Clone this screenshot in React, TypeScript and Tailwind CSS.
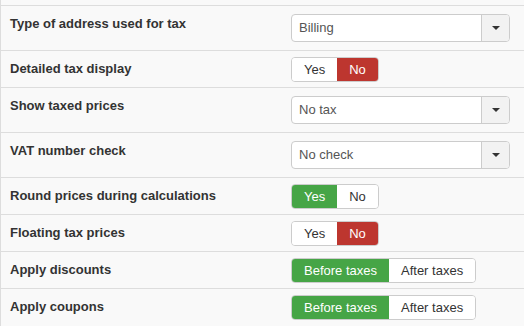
import React from 'react';

type Row =
  | { label: string; kind: 'select'; value: string }
  | { label: string; kind: 'toggle'; options: string[]; active: number; tone: 'green' | 'red' };

const rows: Row[] = [
  { label: 'Type of address used for tax', kind: 'select', value: 'Billing' },
  { label: 'Detailed tax display', kind: 'toggle', options: ['Yes', 'No'], active: 1, tone: 'red' },
  { label: 'Show taxed prices', kind: 'select', value: 'No tax' },
  { label: 'VAT number check', kind: 'select', value: 'No check' },
  { label: 'Round prices during calculations', kind: 'toggle', options: ['Yes', 'No'], active: 0, tone: 'green' },
  { label: 'Floating tax prices', kind: 'toggle', options: ['Yes', 'No'], active: 1, tone: 'red' },
  { label: 'Apply discounts', kind: 'toggle', options: ['Before taxes', 'After taxes'], active: 0, tone: 'green' },
  { label: 'Apply coupons', kind: 'toggle', options: ['Before taxes', 'After taxes'], active: 0, tone: 'green' },
];

function Select({ value }: { value: string }) {
  return (
    <div className="flex h-[28px] w-[219px] overflow-hidden rounded-[4px] border border-[#cccccc] bg-white">
      <div className="flex flex-1 items-center pl-[7px] text-[13px] text-[#555555]">{value}</div>
      <div className="flex w-[28px] items-center justify-center border-l border-[#cccccc] bg-[#f2f2f2]">
        <svg width="8" height="4" viewBox="0 0 8 4">
          <path d="M0 0h8L4 4z" fill="#333333" />
        </svg>
      </div>
    </div>
  );
}

function Toggle({ options, active, tone }: { options: string[]; active: number; tone: 'green' | 'red' }) {
  return (
    <div className="flex h-[25px] overflow-hidden rounded-[4px] border border-[#cccccc]">
      {options.map((opt, i) => {
        const on = i === active;
        const cls = on
          ? tone === 'green'
            ? 'bg-[#46a546] text-white'
            : 'bg-[#bd362f] text-white'
          : 'bg-white text-[#333333]';
        return (
          <div key={opt} className={`flex items-center px-3 text-[13px] ${cls}`}>
            {opt}
          </div>
        );
      })}
    </div>
  );
}

export default function App() {
  return (
    <div className="h-[326px] w-[524px] overflow-hidden border-l border-[#dddddd] bg-[#f9f9f9] font-['Liberation_Sans',Arial,sans-serif]">
      <div className="h-[5px]" />
      {rows.map((row) => (
        <div key={row.label} className="flex border-t border-[#dddddd]">
          <div className="w-[290px] shrink-0 py-2 pl-[9px] text-[13px] leading-5 font-bold text-[#333333]">
            {row.label}
          </div>
          <div className={row.kind === 'select' ? 'py-2' : 'pt-[6px] pb-[5px]'}>
            {row.kind === 'select' ? (
              <Select value={row.value} />
            ) : (
              <Toggle options={row.options} active={row.active} tone={row.tone} />
            )}
          </div>
        </div>
      ))}
    </div>
  );
}
